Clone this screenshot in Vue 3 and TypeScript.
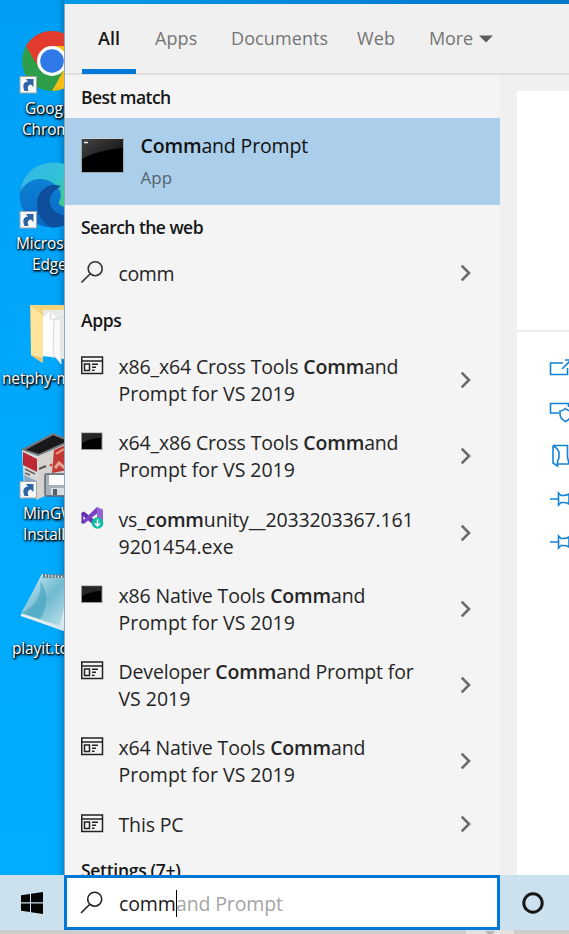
<script setup lang="ts">
type IconKind = 'window' | 'console' | 'vs'
interface Part { t: string; b?: boolean }
interface AppRow { icon: IconKind; lines: Part[][] }
interface Label { text: string; x: number }
interface Shortcut { id: string; labels: Label[] }

const tabs: string[] = ['All', 'Apps', 'Documents', 'Web', 'More']

const rows: AppRow[] = [
  { icon: 'window', lines: [[{ t: 'x86_x64 Cross Tools ' }, { t: 'Comm', b: true }, { t: 'and' }], [{ t: 'Prompt for VS 2019' }]] },
  { icon: 'console', lines: [[{ t: 'x64_x86 Cross Tools ' }, { t: 'Comm', b: true }, { t: 'and' }], [{ t: 'Prompt for VS 2019' }]] },
  { icon: 'vs', lines: [[{ t: 'vs_' }, { t: 'comm', b: true }, { t: 'unity__2033203367.161' }], [{ t: '9201454.exe' }]] },
  { icon: 'console', lines: [[{ t: 'x86 Native Tools ' }, { t: 'Comm', b: true }, { t: 'and' }], [{ t: 'Prompt for VS 2019' }]] },
  { icon: 'window', lines: [[{ t: 'Developer ' }, { t: 'Comm', b: true }, { t: 'and Prompt for' }], [{ t: 'VS 2019' }]] },
  { icon: 'window', lines: [[{ t: 'x64 Native Tools ' }, { t: 'Comm', b: true }, { t: 'and' }], [{ t: 'Prompt for VS 2019' }]] },
  { icon: 'window', lines: [[{ t: 'This PC' }]] },
]

const shortcuts: Shortcut[] = [
  { id: 'chrome', labels: [{ text: 'Google', x: 25 }, { text: 'Chrome', x: 22 }] },
  { id: 'edge', labels: [{ text: 'Microsoft', x: 16 }, { text: 'Edge', x: 32 }] },
  { id: 'folder', labels: [{ text: 'netphy-m', x: 2 }] },
  { id: 'mingw', labels: [{ text: 'MinGW', x: 23 }, { text: 'Installer', x: 23 }] },
  { id: 'notes', labels: [{ text: 'playit.to', x: 12 }] },
]
</script>

<template>
  <div class="screen">
    <div class="upper">
      <div class="desktop">
        <div v-for="s in shortcuts" :key="s.id" class="shortcut">
          <svg class="art" width="64" height="70" viewBox="0 0 64 70">
            <g v-if="s.id === 'chrome'">
              <circle cx="52" cy="34" r="30" fill="#2f9e48" />
              <path d="M26 19A30 30 0 0 1 78 19L52 19L39 41Z" fill="#e33b2e" />
              <path d="M52 19H78A30 30 0 0 1 52 64L65 41Z" fill="#f5bd15" />
              <circle cx="52" cy="34" r="15" fill="#fff" />
              <circle cx="52" cy="34" r="11.8" fill="#3079e8" />
            </g>
            <g v-else-if="s.id === 'edge'">
              <defs>
                <linearGradient id="eg" x1="0" y1="0" x2="1" y2=".7"><stop offset="0" stop-color="#35b7ef" /><stop offset=".55" stop-color="#32c1d6" /><stop offset="1" stop-color="#48cf72" /></linearGradient>
                <linearGradient id="eb" x1="0" y1="0" x2="0" y2="1"><stop offset="0" stop-color="#0d8ada" /><stop offset="1" stop-color="#0a68c4" /></linearGradient>
              </defs>
              <circle cx="52" cy="33" r="32.5" fill="url(#eb)" />
              <path d="M20 30C23 11 36 1 52 .5C74 0 84 15 84 30C84 44 68 48 60 43C57 40 61 38 61 33C60 22 44 13 31 19C25 22 22 26 20 30Z" fill="url(#eg)" />
              <path d="M61 24C48 20 37 29 37 42C37 53 43 62 52 65.5C63 66 74 60 79 51C68 57 53 53 50 42C49 35 52 29 61 24Z" fill="#0e4f9d" />
            </g>
            <g v-else-if="s.id === 'folder'">
              <path d="M30 8H64V20H43V66L31 58Z" fill="#f6d37c" />
              <path d="M31 9L43 19V66L31 58Z" fill="#ffe49c" />
              <path d="M43 13H64V62L43 59Z" fill="#e9ebe8" />
              <path d="M43 20L51 14L57 22V59H43Z" fill="#fff" />
              <path d="M51 14L50 22L56 22M54 23L64 19M54 23L53 57L61 67V23" fill="#fafafa" stroke="#d7d7d7" stroke-width="1" />
              <path d="M31 58L43 61V66Z" fill="#e7c46f" />
            </g>
            <g v-else-if="s.id === 'mingw'">
              <path d="M23 18L53 2L70 9L39 23Z" fill="#19191b" stroke="#777" stroke-width="2" />
              <path d="M22 18L38 24V68L24 58Z" fill="#d9d6d6" />
              <path d="M23 20L37 27V40L23 33Z" fill="#bd2832" />
              <path d="M24 43L37 49V65L25 57Z" fill="#86a8c2" />
              <path d="M25 37L35 42M25 41L30 43" stroke="#666" stroke-width="1.5" />
              <path d="M38 24L68 11V55L38 67Z" fill="#d5d2d0" />
              <path d="M54 18L68 12V38L52 41Z" fill="#c23a35" />
              <path d="M56 22L64 17" stroke="#ed9d8e" stroke-width="2" />
              <path d="M55 36L59 31L66 37" fill="none" stroke="#e5a194" stroke-width="3" />
              <path d="M39 37L46 34" stroke="#555" stroke-width="2" /><circle cx="51" cy="33" r="1.5" fill="#d54a36" />
              <rect x="45" y="42" width="24" height="22" rx="1.5" fill="#a5b2bc" stroke="#5d6871" stroke-width="1.5" />
              <rect x="49" y="43" width="18" height="10" fill="#fbfbfb" /><rect x="51" y="56" width="15" height="7" fill="#d7dde1" /><rect x="53" y="57" width="4" height="6" fill="#52606b" />
            </g>
            <g v-else>
              <defs><linearGradient id="np" x1="0" y1="0" x2="1" y2="1"><stop offset="0" stop-color="#d5eef6" /><stop offset=".5" stop-color="#70bad1" /><stop offset="1" stop-color="#c9e5ee" /></linearGradient></defs>
              <path d="M42 7L75 10L64 62L21 48Z" fill="#d8e8ee" />
              <path d="M42 9L70 12L60 59L21 46Z" fill="url(#np)" />
              <path d="M40 14C43 30 32 42 21 46L40 52C49 38 48 24 40 14Z" fill="#3b9fbd" opacity=".55" />
              <path d="M43 9H64" stroke="#6c7d86" stroke-width="4" stroke-dasharray="2 1.2" />
              <path d="M21 48L64 63" stroke="#e7eef0" stroke-width="2" />
            </g>
            <g v-if="s.id === 'chrome' || s.id === 'edge' || s.id === 'mingw'">
              <rect x="20" y="49.500" width="16.500" height="16.500" fill="#f6f8f9" stroke="#a2a6a9" />
              <path d="M24.500 64C22 58 24 54.500 28 54.500L26 52H33.500V60L31 57.500C28 58 27 60 28.500 64Z" fill="#2c64a5" />
            </g>
          </svg>
          <div v-for="l in s.labels" :key="l.text" class="label" :style="{ marginLeft: l.x + 'px' }">{{ l.text }}</div>
        </div>
      </div>

      <div class="panel">
        <nav class="tabs">
          <div v-for="(t, i) in tabs" :key="t" class="tab" :class="['tab-' + i, { active: i === 0 }]">
            <span>{{ t }}</span>
            <svg v-if="t === 'More'" class="caret" width="14" height="8" viewBox="0 0 14 8"><path d="M0 .5H14L7 7.500Z" fill="#5c5c5c" /></svg>
          </div>
        </nav>
        <div class="content">
          <div class="results">
            <h2 class="best">Best match</h2>
            <div class="hero">
              <svg width="44" height="36" viewBox="0 0 44 36">
                <defs><linearGradient id="cm" x1="0" y1="0" x2="1" y2=".7"><stop offset="0" stop-color="#444" /><stop offset="1" stop-color="#151515" /></linearGradient></defs>
                <rect x=".500" y=".500" width="42" height="34" fill="#000" stroke="#9fa9b0" />
                <path d="M1 1H42V10C27 11 9 16 1 21Z" fill="url(#cm)" />
                <path d="M0 .5H42" stroke="#cbd2d7" /><path d="M3 4.500H7" stroke="#eee" stroke-width="1.500" />
              </svg>
              <div class="hero-text">
                <div class="hero-title"><b>Comm</b>and Prompt</div>
                <div class="hero-sub">App</div>
              </div>
            </div>
            <h2>Search the web</h2>
            <div class="row single web">
              <svg class="glass" width="24" height="24" viewBox="0 0 24 24"><circle cx="14.200" cy="8.700" r="7" fill="none" stroke="#333" stroke-width="1.600" /><path d="M9.300 13.700L.500 22.500" stroke="#333" stroke-width="1.600" /></svg>
              <div class="text">comm</div>
              <svg class="chev" width="12" height="18" viewBox="0 0 12 18"><path d="M1.700 1.700L9 9L1.700 16.300" /></svg>
            </div>
            <h2 class="apps">Apps</h2>
            <div v-for="(r, i) in rows" :key="i" class="row" :class="{ single: r.lines.length === 1 }">
              <svg class="icon" width="24" height="24" viewBox="0 0 24 24">
                <g v-if="r.icon === 'window'" fill="none" stroke="#222" stroke-width="1.500">
                  <path d="M.75 4H21.500V20.500H.75ZM.75 8H21.500M3.500 11H8.500V17.500H3.500ZM11 11.200H17M11 14.200H15M11 17.300H13.500" />
                </g>
                <g v-else-if="r.icon === 'console'">
                  <rect x=".500" y="4" width="20.500" height="16.500" fill="#020202" stroke="#999" />
                  <path d="M1 4.500H20.500V9C14 9 6 11 1 14Z" fill="#262626" />
                </g>
                <g v-else>
                  <path d="M16 1L22 3.500V19L16 22Z" fill="#9562d6" />
                  <path d="M.5 7L3 5.500L16 16V22L.5 8.500Z" fill="#6031ac" />
                  <path d="M.5 16L16 1V7.500L3.500 17.500L.5 17Z" fill="#7940c5" />
                  <path d="M.5 7L2.500 6V18L.5 17Z" fill="#6031ac" />
                  <circle cx="16.500" cy="17" r="5.800" fill="#10bea5" /><path d="M16.500 13.500V20M14 17.500L16.500 20L19 17.500" fill="none" stroke="#fff" stroke-width="1.500" />
                </g>
              </svg>
              <div class="text"><div v-for="(ln, j) in r.lines" :key="j" class="line"><template v-for="(p, k) in ln" :key="k"><b v-if="p.b">{{ p.t }}</b><template v-else>{{ p.t }}</template></template></div></div>
              <svg class="chev" width="12" height="18" viewBox="0 0 12 18"><path d="M1.700 1.700L9 9L1.700 16.300" /></svg>
            </div>
            <h2 class="settings">Settings (7+)</h2>
          </div>
          <aside class="preview">
            <div class="summary"></div>
            <div class="actions">
              <svg width="24" height="24" viewBox="0 0 24 24"><path d="M14 6H1.500V17.500H18.500V11M13 12L22 3M16 3H22V9" /></svg>
              <svg width="24" height="24" viewBox="0 0 24 24"><path d="M10 13H1.500V3.500H19.500V7M16.500 8.500C14.500 10.500 13 11 11 11V14C11 17.500 13.500 20 16.500 21.500C19.500 20 22 17.500 22 14V11C20 11 18.500 10.500 16.500 8.500Z" /></svg>
              <svg width="24" height="24" viewBox="0 0 24 24"><path d="M4 1.500H18.500V13L20 20H9M4 1.500V19L8.500 22V17L10 14V8L8 4.500L4 1.500" /></svg>
              <svg width="24" height="24" viewBox="0 0 24 24"><path d="M1 12H9.500M9.500 6V18L12 15.500C15 15.500 17 15 20 17V7C17 9 15 8.500 12 8.500Z" /></svg>
              <svg width="24" height="24" viewBox="0 0 24 24"><path d="M1 12H9.500M9.500 6V18L12 15.500C15 15.500 17 15 20 17V7C17 9 15 8.500 12 8.500Z" /></svg>
            </div>
          </aside>
        </div>
      </div>
    </div>

    <div class="taskbar">
      <div class="start"><svg width="22" height="22" viewBox="0 0 22 22"><path d="M0 3.200L9 1.900V10.300H0ZM10 1.700L22 0V10.300H10ZM0 11.400H9V20L0 18.800ZM10 11.400H22V22L10 20.300Z" fill="#050505" /></svg></div>
      <div class="search">
        <svg width="24" height="24" viewBox="0 0 24 24"><circle cx="14.700" cy="8.200" r="7" fill="none" stroke="#222" stroke-width="1.600" /><path d="M9.800 13.200L1 22" stroke="#222" stroke-width="1.600" /></svg>
        <div class="query"><span class="typed">comm</span><span class="cursor"></span><span class="ghost">and Prompt</span></div>
      </div>
      <div class="cortana"><svg width="24" height="24" viewBox="0 0 24 24"><circle cx="12" cy="12" r="9.200" fill="none" stroke="#161616" stroke-width="3" /></svg></div>
    </div>
    <div class="strip"><div class="handle"><svg width="10" height="3" viewBox="0 0 10 3"><path d="M0 0H10L7 3H3Z" fill="#b5b5b5" /></svg></div></div>
  </div>
</template>

<style>
body { margin: 0; overflow: hidden; }
</style>
<style scoped>
.screen { width: 569px; height: 934px; display: flex; flex-direction: column; overflow: hidden; font-family: "Open Sans", "Noto Sans", sans-serif; font-variant-ligatures: none; color: #1c1c1c; }
.screen svg { flex: none; display: block; }
.upper { height: 875px; display: flex; background: linear-gradient(90deg, #009fec, #007fd6 400px, #0079cc); overflow: hidden; }
.desktop { width: 64px; box-sizing: border-box; padding-top: 27px; flex: none; overflow: hidden; background: linear-gradient(180deg, #009ff5, #00a8fc 40%, #00adff); box-shadow: inset -7px 0 6px -5px #005b9690; }
.shortcut { height: 135px; overflow: hidden; }
.art { margin-bottom: 1px; }
.label { font-size: 15.500px; line-height: 21px; height: 21px; white-space: nowrap; color: #fff; letter-spacing: -.15px; text-shadow: 1px 1px 2px #000, 1px 1px 2px #000, 0 1px 3px #002b50; }
.panel { flex: 1; margin-top: 4px; background: #f0f0f0; border-left: 1px solid #91a9b5; box-sizing: border-box; min-width: 0; display: flex; flex-direction: column; }
.tabs { height: 71px; box-sizing: border-box; border-bottom: 2px solid #dfdfdf; display: flex; padding-left: 17px; flex: none; }
.tab { display: flex; box-sizing: border-box; height: 70px; font-size: 18px; line-height: 68px; color: #757575; white-space: nowrap; flex: none; letter-spacing: .1px; }
.tab-0 { width: 54px; padding-left: 16px; } .tab-1 { width: 76px; padding-left: 19px; } .tab-2 { width: 126px; padding-left: 19px; } .tab-3 { width: 72px; padding-left: 19px; } .tab-4 { padding-left: 19px; letter-spacing: -.1px; }
.active { font-weight: 600; color: #171717; border-bottom: 5px solid #0078d7; }
.caret { margin: 31px 0 0 6px; }
.content { flex: 1; display: flex; min-height: 0; }
.results { width: 435px; height: 800px; flex: none; background: #f4f4f4; overflow: hidden; }
h2 { margin: 0; height: 44px; line-height: 44px; padding-left: 16px; font-size: 17.500px; font-weight: 600; letter-spacing: -.55px; color: #161616; }
.best { height: 43px; }
.apps { height: 44px; letter-spacing: -.35px; }
.settings { letter-spacing: -.3px; line-height: 42px; }
b { font-weight: 600; }
.hero { height: 87px; box-sizing: border-box; background: #abceea; padding: 14px 0 0 16px; display: flex; gap: 15.500px; }
.hero > svg { margin-top: 6px; }
.hero-title { font-size: 19.500px; line-height: 27px; letter-spacing: -.15px; color: #111; }
.hero-sub { font-size: 17px; line-height: 26px; margin-top: 6px; color: #55626d; }
.row { height: 76.250px; box-sizing: border-box; padding: 11px 28px 0 16px; display: flex; font-size: 19.500px; line-height: 27.200px; letter-spacing: -.15px; }
.single { height: 49px; }
.web { letter-spacing: -.4px; }
.text { flex: 1; padding-left: 13.500px; white-space: nowrap; color: #252525; }
.line { height: 27.200px; white-space: pre; }
.line + .line { letter-spacing: -.02px; }
.chev { margin-top: 18px; }
.single .chev { margin-top: 4px; }
.chev path { fill: none; stroke: #6b6b6b; stroke-width: 2.600; }
.preview { flex: 1; margin: 16px 0 0 16.500px; background: #fff; overflow: hidden; }
.summary { height: 239px; border-bottom: 2px solid #eee; }
.actions { padding: 25px 0 0 32px; display: flex; flex-direction: column; gap: 19.300px; }
.actions path { fill: none; stroke: #1682d4; stroke-width: 1.600; }
.taskbar { height: 55px; flex: none; display: flex; background: #cbe2ee; }
.start { width: 64px; display: flex; align-items: center; justify-content: center; }
.search { width: 436px; box-sizing: border-box; border: 3px solid #0078d7; background: #fff; display: flex; padding: 13px 0 0 13px; }
.query { display: flex; padding-left: 15px; margin-top: -1px; font-size: 19.500px; line-height: 27px; letter-spacing: -.15px; white-space: pre; }
.cursor { width: 1.500px; height: 27px; margin-right: -1px; background: #000; }
.ghost { color: #a5a5a5; }
.cortana { flex: 1; display: flex; align-items: center; justify-content: center; padding-right: 4px; }
.strip { flex: 1; background: #cdcdcd; display: flex; }
.handle { width: 48px; margin-left: 466px; background: #e2e2e2; display: flex; justify-content: center; align-items: flex-end; }
</style>
